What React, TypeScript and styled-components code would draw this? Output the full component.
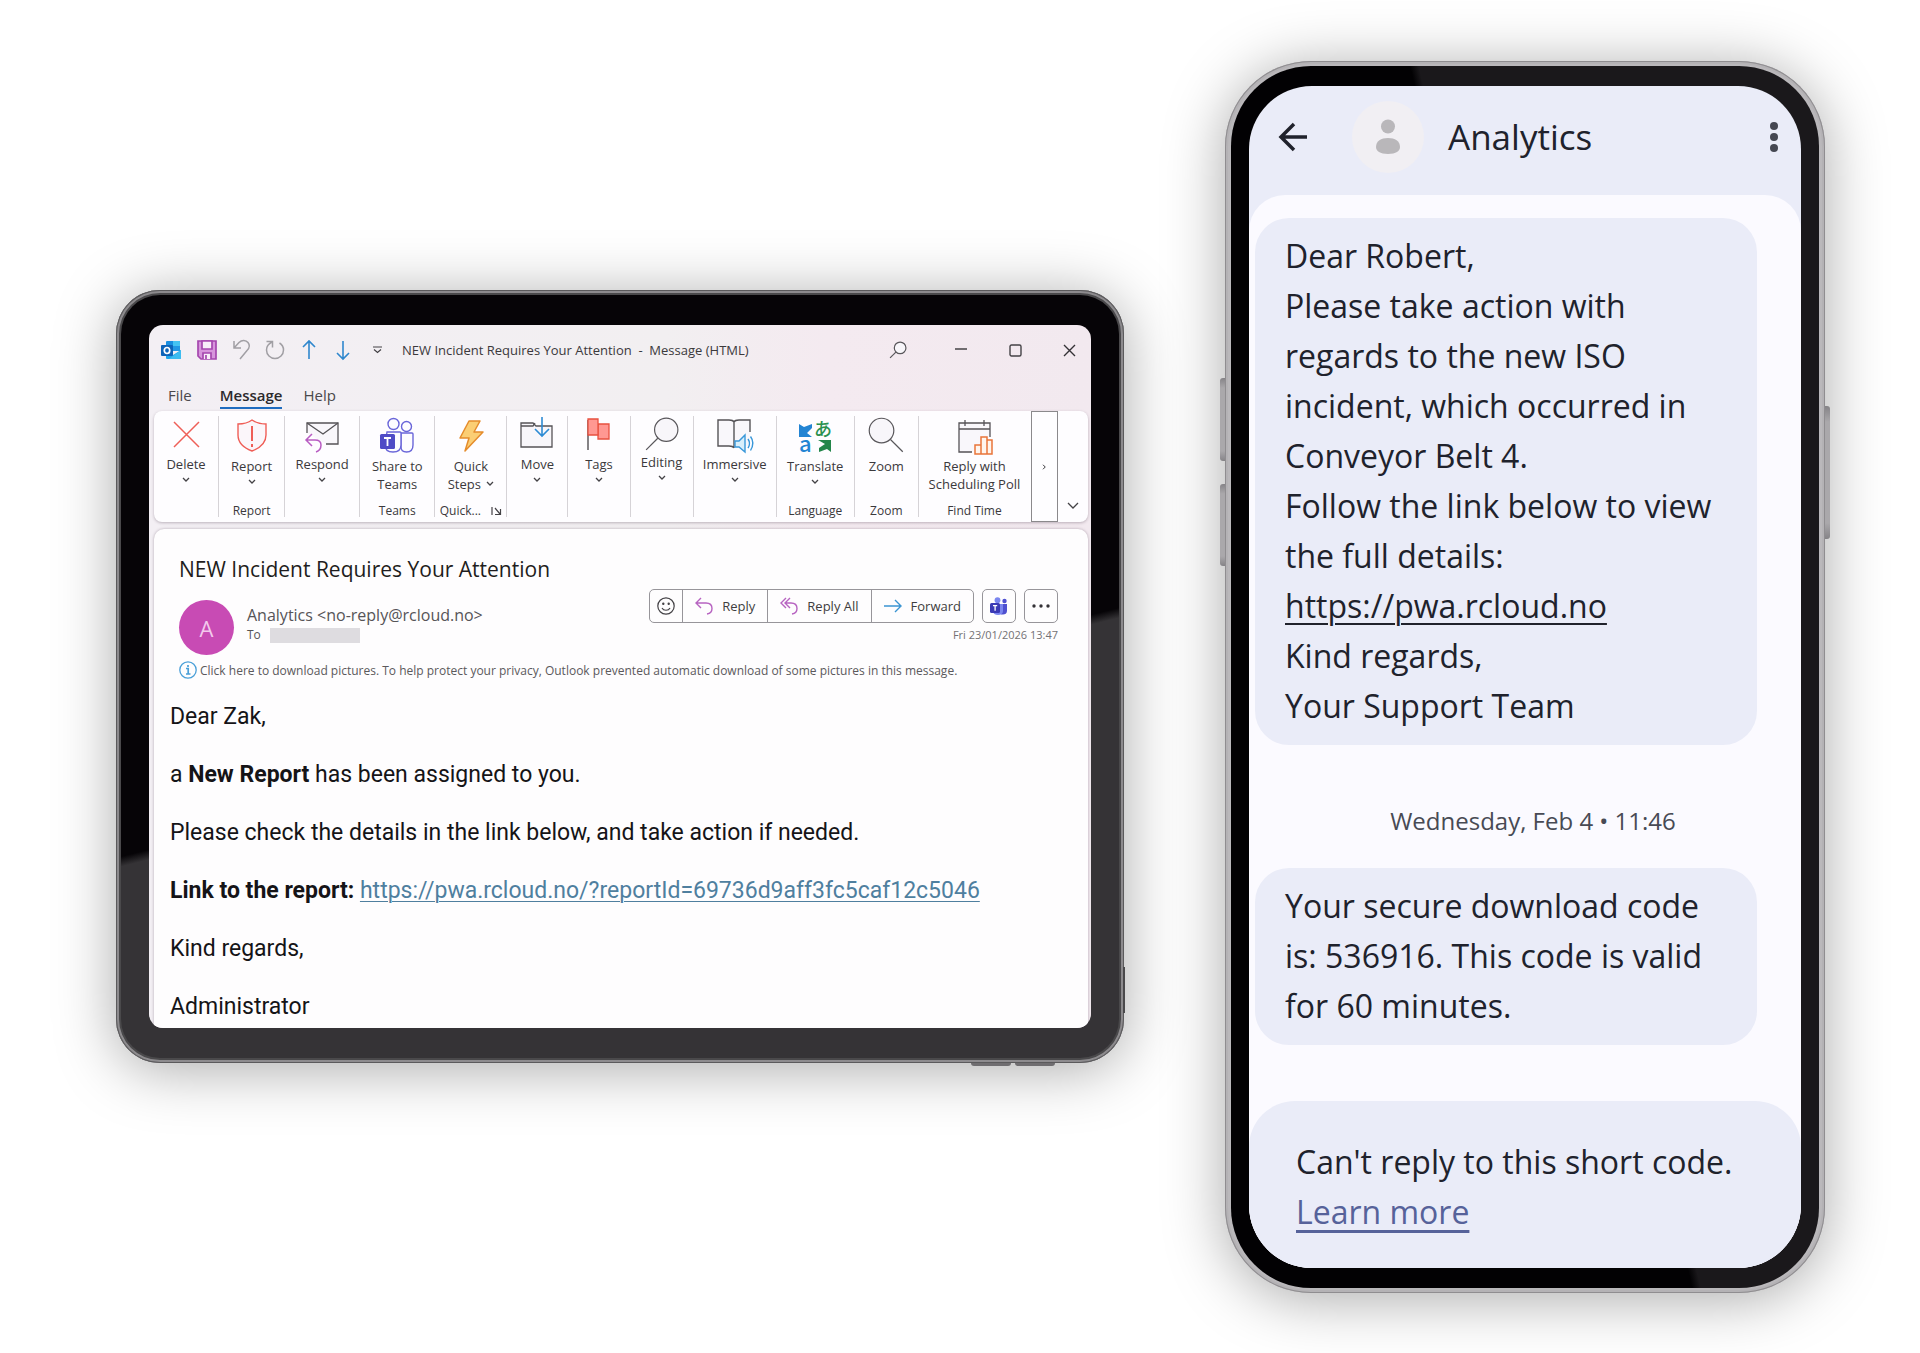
import React from 'react';
import styled, { createGlobalStyle, css } from 'styled-components';

const GlobalStyle = createGlobalStyle`
  *, *::before, *::after { box-sizing: border-box; }
  body {
    margin: 0;
    background: #fff;
    font-family: 'Open Sans', 'Noto Sans', sans-serif;
  }
  button {
    margin: 0;
    padding: 0;
    border: 0;
    background: none;
    font: inherit;
    color: inherit;
    cursor: pointer;
  }
  h1, h2, p { margin: 0; font-weight: 400; }
  svg { display: block; flex: none; overflow: visible; }
`;

const Stage = styled.main`
  display: flex;
  align-items: center;
  gap: 101px;
  min-height: 100vh;
  padding: 60px 95px 60px 116px;
`;

/* ---------- devices ---------- */

const Tablet = styled.section`
  position: relative;
  flex: 1 1 1008px;
  min-width: 0;
  padding: 5px;
  border-radius: 44px;
  background: #4a494b;
  box-shadow:
    inset 0 0 0 1px #5b5a5c,
    inset 0 0 0 3px #8d8b8e,
    0 6px 60px rgba(0, 0, 0, 0.34);
`;

const TabletBezel = styled.div`
  padding: 30px 28px;
  border-radius: 39px;
  background: linear-gradient(166deg, #060407 55.5%, #353336 56.5%);
`;

const TabletScreen = styled.div`
  overflow: hidden;
  padding: 0 3px 0 5px;
  border-radius: 14px;
  background: linear-gradient(90deg, #f3eff4 0%, #f2eff1 55%, #f4eaf0 72%, #f2e9ef 100%);
`;

const Phone = styled.section`
  position: relative;
  flex: 0 1 600px;
  min-width: 0;
  padding: 5px 6px;
  border-radius: 86px;
  background: #bab8bb;
  box-shadow:
    inset 0 0 0 1px #8f8d90,
    inset 0 0 0 3px #b4b2b5,
    0 6px 60px rgba(0, 0, 0, 0.34);
`;

const PhoneBezel = styled.div`
  padding: 20px 18px;
  border-radius: 80px;
  background: linear-gradient(77deg, #020103 53%, #1a181b 54%);
`;

const PhoneScreen = styled.div`
  overflow: hidden;
  border-radius: 63px;
  background: #eaecf8;
  color: #20222c;
`;

const SideKey = styled.span<{ $side: 'left' | 'right' | 'bottom'; $at: number; $length: number }>`
  position: absolute;
  background: linear-gradient(#858387, #aaa8ab 12%, #aaa8ab 88%, #858387);
  ${({ $side, $at, $length }) =>
    $side === 'bottom'
      ? css`
          bottom: -3px;
          right: ${$at}px;
          width: ${$length}px;
          height: 3px;
          border-radius: 0 0 3px 3px;
          background: #6f6d70;
        `
      : css`
          ${$side}: -5px;
          top: ${$at}px;
          width: 5px;
          height: ${$length}px;
          border-radius: ${$side === 'left' ? '3px 0 0 3px' : '0 3px 3px 0'};
        `}
`;

const TabletEdge = styled.span`
  position: absolute;
  right: -1px;
  bottom: 50px;
  width: 2px;
  height: 46px;
  background: #4a494b;
`;

/* ---------- outlook title bar ---------- */

const TitleBar = styled.header`
  display: flex;
  align-items: center;
  height: 50px;
  margin-left: -2px;
  color: #3b393c;
  font-size: 13px;
`;

const QuickButton = styled.button<{ $wide?: boolean }>`
  display: flex;
  justify-content: center;
  width: ${({ $wide }) => ($wide ? 38 : 34)}px;
`;

const WindowTitle = styled.h1`
  flex: 1;
  min-width: 0;
  padding-left: 8px;
  font-size: 13px;
  line-height: 20px;
  white-space: pre;
`;

const WindowButton = styled.button<{ $width?: number }>`
  display: flex;
  justify-content: center;
  width: ${({ $width = 54 }) => $width}px;
  &:last-child { margin-left: 8px; }
`;

const Tabs = styled.nav`
  display: flex;
  align-items: flex-start;
  gap: 21px;
  height: 36px;
  padding: 9px 14px;
`;

const Tab = styled.button<{ $active?: boolean }>`
  padding-bottom: 1px;
  border-bottom: 2px solid ${({ $active }) => ($active ? '#1f6cbf' : 'transparent')};
  color: ${({ $active }) => ($active ? '#2b292c' : '#4a484b')};
  font-size: 15px;
  font-weight: ${({ $active }) => ($active ? 600 : 400)};
  line-height: 22px;
  &:first-child { margin-right: 7px; }
`;

/* ---------- ribbon ---------- */

const Ribbon = styled.div`
  display: grid;
  grid-template-columns: 65fr 66fr 75fr 75fr 72fr 61fr 62fr 63fr 83fr 78fr 64fr 112fr 27px 30px;
  height: 111px;
  border-radius: 8px;
  background: #fefdff;
  box-shadow: 0 1px 3px rgba(60, 40, 60, 0.3);
  color: #3b393c;
`;

const Group = styled.section<{ $last?: boolean }>`
  display: flex;
  flex-direction: column;
  align-items: center;
  justify-content: space-between;
  margin: 5px 0;
  border-right: 1px solid ${({ $last }) => ($last ? 'transparent' : '#d6d3d7')};
`;

const GroupButton = styled.button<{ $captioned?: boolean }>`
  display: flex;
  flex-direction: column;
  align-items: center;
  font-size: 13px;
  line-height: 18px;
  white-space: pre;
  svg:first-child { margin: ${({ $captioned }) => ($captioned ? '0 0 3px' : '0 0 1px')}; }
`;

const StepLine = styled.span`
  display: flex;
  align-items: center;
  gap: 5px;
`;

const Caption = styled.span`
  display: flex;
  align-items: center;
  gap: 10px;
  font-size: 12px;
  line-height: 12px;
`;

const MoreGroups = styled.button`
  display: flex;
  align-items: center;
  justify-content: center;
  border: 1px solid #8b898c;
`;

const CollapseRibbon = styled.button`
  display: flex;
  align-items: flex-end;
  justify-content: center;
  padding-bottom: 12px;
`;

/* ---------- mail ---------- */

const Mail = styled.article`
  margin-top: 7px;
  padding: 24px 30px 7px 25px;
  border-radius: 10px 10px 0 0;
  background: #fefdfe;
  box-shadow: 0 0 3px rgba(60, 40, 60, 0.35);
`;

const Subject = styled.h2`
  color: #1f1d20;
  font-size: 21px;
  line-height: 32px;
`;

const MailHead = styled.div`
  display: flex;
  align-items: flex-start;
  padding-top: 4px;
`;

const Avatar = styled.span`
  display: flex;
  align-items: center;
  justify-content: center;
  width: 55px;
  height: 55px;
  margin: 11px 13px 0 0;
  border-radius: 50%;
  background: #c84bb4;
  color: #f3c9ec;
  font-size: 22px;
`;

const Sender = styled.div`
  flex: 1;
  min-width: 0;
  padding-top: 15px;
  color: #565457;
  font-size: 16px;
  line-height: 22px;
`;

const ToLine = styled.div`
  display: flex;
  align-items: center;
  gap: 9px;
  font-size: 12px;
  line-height: 18px;
`;

const Redacted = styled.span`
  width: 90px;
  height: 15px;
  background: #dedce0;
`;

const Actions = styled.div`
  display: flex;
  flex-direction: column;
  align-items: flex-end;
  color: #3f3d40;
  font-size: 13px;
`;

const ActionRow = styled.div`
  display: flex;
  gap: 8px;
`;

const ActionGroup = styled.div`
  display: flex;
  height: 34px;
  border: 1px solid #97959a;
  border-radius: 5px;
`;

const Action = styled.button<{ $icon?: boolean }>`
  display: flex;
  align-items: center;
  justify-content: center;
  gap: 9px;
  min-width: 32px;
  padding: 0 ${({ $icon }) => ($icon ? 0 : 12)}px;
  & + & { border-left: 1px solid #97959a; }
`;

const Sent = styled.time`
  color: #737174;
  font-size: 11px;
  line-height: 24px;
`;

const InfoBar = styled.button`
  display: flex;
  align-items: center;
  gap: 3px;
  height: 30px;
  color: #5b595c;
  font-size: 12px;
  text-align: left;
`;

const MailBody = styled.div`
  display: flex;
  flex-direction: column;
  gap: 29px;
  margin-left: -9px;
  padding-top: 17px;
  color: #151417;
  font-family: Roboto, 'Open Sans', sans-serif;
  font-size: 23px;
  line-height: 29px;
`;

const MailLink = styled.a`
  color: #4f7f9f;
  text-decoration-thickness: 1px;
  text-underline-offset: 3px;
`;

/* ---------- phone messages ---------- */

const ChatHeader = styled.header`
  display: flex;
  align-items: center;
  height: 109px;
  padding: 0 22px 6px 29px;
`;

const Contact = styled.span`
  display: flex;
  align-items: center;
  justify-content: center;
  width: 72px;
  height: 72px;
  margin: 0 24px 0 44px;
  border-radius: 50%;
  background: #f1eff3;
`;

const ContactName = styled.h2`
  flex: 1;
  font-size: 35px;
  line-height: 50px;
`;

const Thread = styled.div`
  display: flex;
  flex-direction: column;
  padding: 23px 44px 56px 6px;
  border-radius: 36px 36px 0 0;
  background: #fbfaff;
`;

const Bubble = styled.div`
  padding: 13px 30px 14px;
  border-radius: 34px;
  background: #eaecf8;
  font-size: 32px;
  line-height: 50px;
`;

const ChatLink = styled.a`
  color: inherit;
  text-decoration-thickness: 2px;
  text-underline-offset: 5px;
`;

const DateLine = styled.time`
  padding: 51px 0 22px 54px;
  color: #484a54;
  font-size: 24px;
  line-height: 50px;
  text-align: center;
`;

const ChatFooterArea = styled.div`
  background: #fbfaff;
`;

const ChatFooter = styled.footer`
  padding: 36px 47px 31px;
  border-radius: 46px 46px 0 0;
  background: #eaecf8;
  font-size: 32px;
  line-height: 50px;
`;

const LearnMore = styled(ChatLink)`
  color: #56629a;
  text-decoration-thickness: 3px;
  text-underline-offset: 6px;
`;

/* ---------- icons ---------- */

const Chevron = ({ size = 8, gap = 4 }: { size?: number; gap?: number }) => (
  <svg width={size} height={size + gap} viewBox={`0 0 8 ${8 + gap}`} fill="none" stroke="#444246" strokeWidth="1.3">
    <path d={`M1 ${3 + gap / 2} l3 3 l3 -3`} />
  </svg>
);

const OutlookIcon = () => (
  <svg width="20" height="20" viewBox="0 0 20 20">
    <path d="M6 1h12a1 1 0 0 1 1 1v9H5V2a1 1 0 0 1 1-1z" fill="#1a8fe0" />
    <path d="M12 1h6a1 1 0 0 1 1 1v4h-7z" fill="#45c4f2" />
    <path d="M12 6h7v5h-7z" fill="#2398e4" />
    <path d="M5 11l7 4 8-5v8a1 1 0 0 1-1 1H6a1 1 0 0 1-1-1z" fill="#1fa6ea" />
    <path d="M20 10v8a1 1 0 0 1-1 1H8z" fill="#3cbcf0" />
    <rect x="0" y="5" width="12" height="11" rx="1" fill="#0f64b8" />
    <ellipse cx="6" cy="10.500" rx="2.700" ry="3" fill="none" stroke="#fff" strokeWidth="1.700" />
  </svg>
);

const SaveIcon = () => (
  <svg width="20" height="20" viewBox="0 0 20 20" fill="none" stroke="#a546ae" strokeWidth="1.700">
    <path d="M1 1h18v18H4l-3-3z" fill="#d795dc" />
    <path d="M5 1h10v8H5z" fill="#f8edf9" />
    <path d="M6 19v-6h8v6" fill="#f8edf9" />
    <path d="M9 15v4" />
  </svg>
);

const UndoIcon = () => (
  <svg width="19" height="20" viewBox="0 0 19 20" fill="none" stroke="#a19fa4" strokeWidth="1.500">
    <path d="M2 1v7h7M2 8l5-5.500c3-3 7-2.500 9 0s1.500 5.500-1 8L8 19" />
  </svg>
);

const RedoIcon = () => (
  <svg width="20" height="20" viewBox="0 0 20 20" fill="none" stroke="#a19fa4" strokeWidth="1.500">
    <path d="M1.500 1.500h6v6M7 2C4 3.500 1.500 6.500 1.500 10a8.500 8.500 0 0 0 17 0c0-3-1.500-5.500-4-7" />
  </svg>
);

const UpArrow = ({ down }: { down?: boolean }) => (
  <svg width="14" height="20" viewBox="0 0 14 20" fill="none" stroke="#2f87cd" strokeWidth="1.600">
    <path d={down ? 'M7 1v18M1 13l6 6 6-6' : 'M7 19V1M1 7l6-6 6 6'} />
  </svg>
);

const CustomizeIcon = () => (
  <svg width="9" height="8" viewBox="0 0 9 8" fill="none" stroke="#444246" strokeWidth="1.200">
    <path d="M0 1h9M1 3.500l3.500 3 3.500-3" />
  </svg>
);

const Magnifier = ({ size, flip, thin = 1.2 }: { size: number; flip?: boolean; thin?: number }) => (
  <svg width={size} height={size} viewBox="0 0 34 34" fill="#f8f6fa" stroke="#59575b" strokeWidth={(thin * 34) / size}>
    <g transform={flip ? 'translate(34 0) scale(-1 1)' : undefined}>
      <circle cx="13" cy="13" r="11" />
      <path d="M21 21l11 11" />
    </g>
  </svg>
);

const DeleteIcon = () => (
  <svg width="38" height="38" viewBox="0 0 38 38" fill="none" stroke="#ee5f58" strokeWidth="1.500">
    <path d="M7 6l25 25M32 6L7 31" />
  </svg>
);

const ReportIcon = () => (
  <svg width="38" height="38" viewBox="0 0 38 38" fill="#fbf6fa" stroke="#ef5e57" strokeWidth="1.400">
    <path d="M19 4c4 3 9 4 14 4v11c0 8-6 13-14 16C11 32 5 27 5 19V8c5 0 10-1 14-4z" />
    <path d="M19 10v15M19 28v3" strokeWidth="2" />
  </svg>
);

const RespondIcon = () => (
  <svg width="38" height="38" viewBox="0 0 38 38" fill="none" stroke="#555357" strokeWidth="1.300">
    <path d="M4 17V7h31v21H23" fill="#f9f7fb" />
    <path d="M4 7l16 11L35 7" />
    <path d="M9 18l-6 6 6 6M3 24h9c4 0 6 2 6 5s-2 6-5 7" stroke="#b85cc2" strokeWidth="1.500" />
  </svg>
);

const TeamsLineIcon = () => (
  <svg width="38" height="38" viewBox="0 0 38 38" fill="#fdfcff" stroke="#6a66d9" strokeWidth="1.400">
    <circle cx="15.500" cy="8" r="5.500" />
    <circle cx="28.500" cy="10.500" r="5" />
    <path d="M23 17h11a1 1 0 0 1 1 1v11c0 5-3 7-6.500 7S23 34 23 31z" />
    <path d="M9 16h13a1 1 0 0 1 1 1v12c0 5-3 7-8 7s-8-2-8-7z" />
    <rect x="2" y="18" width="15" height="15" rx="1.500" fill="#4f4bc6" stroke="none" />
    <path d="M6 22h7M9.500 22v8" stroke="#fff" strokeWidth="1.800" />
  </svg>
);

const BoltIcon = () => (
  <svg width="38" height="38" viewBox="0 0 38 38" fill="#fbce74" stroke="#e58c2c" strokeWidth="1.500" strokeLinejoin="round">
    <path d="M17 5h11l-6 11h9L13 35l4-13H8z" />
  </svg>
);

const MoveIcon = () => (
  <svg width="38" height="38" viewBox="0 0 38 38" fill="none" stroke="#555357" strokeWidth="1.300">
    <path d="M3 31V7h12l3 3h16v21z" fill="#f8f6fa" />
    <path d="M3 10h12l2-3" />
    <path d="M24 1v19M17 13l7 7 7-7" stroke="#2d8bd4" strokeWidth="1.600" />
  </svg>
);

const TagsIcon = () => (
  <svg width="38" height="38" viewBox="0 0 38 38" fill="#ff9892" stroke="#e8503f" strokeWidth="1.300">
    <path d="M8 34V4" stroke="#444246" />
    <path d="M18 8h11v15H18z" />
    <path d="M8 3h10v16H8z" />
  </svg>
);

const ImmersiveIcon = () => (
  <svg width="38" height="38" viewBox="0 0 38 38" fill="#f9f7fb" stroke="#555357" strokeWidth="1.400">
    <path d="M18 6c-2-2-3-2-5-2H2v26h11c2 0 4 0 5 2 1-2 3-2 5-2h11V4H23c-2 0-4 0-5 2z" stroke="none" />
    <path d="M34 16V4H23c-2 0-4 0-5 2-1-2-3-2-5-2H2v26h11c2 0 4 0 5 2M18 6v26" fill="none" />
    <path d="M19 25v6h4l6 5V19l-6 6z" fill="#d9effb" stroke="#3997d9" />
    <path d="M32 23c2 3 2 6 0 9M34.500 20.500c3 4 3 9 0 14" fill="none" stroke="#3997d9" />
  </svg>
);

const Glyph = styled.text`
  font-family: 'Noto Sans CJK JP', sans-serif;
  font-weight: 500;
`;

const TranslateIcon = () => (
  <svg width="38" height="38" viewBox="0 0 38 38">
    <path d="M3 8v13h13l-5-4 5-5V8l-8 3z" fill="#2384d3" />
    <Glyph x="3" y="36" fontSize="22" fill="#2384d3">a</Glyph>
    <Glyph x="18" y="20" fontSize="18" fill="#2b9150">あ</Glyph>
    <path d="M22 24h13v12l-4-3-8 3v-4l6-4z" fill="#23864a" />
  </svg>
);

const PollIcon = () => (
  <svg width="38" height="38" viewBox="0 0 38 38" fill="none" stroke="#555357" strokeWidth="1.300">
    <path d="M17 36H4V7h31v14" fill="#f9f7fb" />
    <path d="M4 13h31M10 4v6M29 4v6" />
    <path d="M20 29h6v9h-6zM26 21h6v17h-6zM32 24h5v14h-5z" fill="#fff5ee" stroke="#e9743a" strokeWidth="1.500" />
  </svg>
);

const LauncherIcon = () => (
  <svg width="11" height="10" viewBox="0 0 11 10" fill="none" stroke="#444246" strokeWidth="1.200">
    <path d="M1 1v8M4 2l5 6M9.500 3v5.500H4" />
  </svg>
);

const SmileIcon = () => (
  <svg width="18" height="18" viewBox="0 0 18 18" fill="none" stroke="#444246" strokeWidth="1.200">
    <circle cx="9" cy="9" r="8.200" />
    <path d="M5 11c1.500 3 6.500 3 8 0" />
    <circle cx="6.300" cy="6.800" r="0.600" fill="#444246" />
    <circle cx="11.700" cy="6.800" r="0.600" fill="#444246" />
  </svg>
);

const ReplyIcon = ({ all }: { all?: boolean }) => (
  <svg width="18" height="18" viewBox="0 0 18 18" fill="none" stroke="#b763c1" strokeWidth="1.400">
    {all ? (
      <path d="M6 1L1 6l5 5M10 1L5 6l5 5M5 6h6c4 0 6 2 6 5.500S15 16.500 12 17" />
    ) : (
      <path d="M6 1L1 6l5 5M1 6h10c4 0 6 2 6 5.500S15 16.500 12 17" />
    )}
  </svg>
);

const ForwardIcon = () => (
  <svg width="18" height="14" viewBox="0 0 18 14" fill="none" stroke="#3b94d2" strokeWidth="1.400">
    <path d="M0 7h16M11 1l6 6-6 6" />
  </svg>
);

const TeamsIcon = () => (
  <svg width="18" height="18" viewBox="0 0 18 18">
    <circle cx="7.500" cy="3.200" r="2.900" fill="#7b86ef" />
    <circle cx="14.500" cy="4" r="2.200" fill="#4f50d0" />
    <path d="M11 7h6v7c0 2.500-2 3.500-4 3.500h-2z" fill="#4f50d0" />
    <path d="M3 7h10v7c0 2.500-2 4-5 4s-5-1.500-5-4z" fill="#7b86ef" />
    <rect x="0" y="6" width="10" height="10" rx="1.500" fill="#3a39b5" />
    <path d="M3 8.700h4.200M5.100 8.700v5" stroke="#fff" strokeWidth="1.300" />
  </svg>
);

const Dots = ({ vertical }: { vertical?: boolean }) =>
  vertical ? (
    <svg width="10" height="32" viewBox="0 0 10 32" fill="#454752">
      <circle cx="5" cy="5" r="4" />
      <circle cx="5" cy="16" r="4" />
      <circle cx="5" cy="27" r="4" />
    </svg>
  ) : (
    <svg width="18" height="4" viewBox="0 0 18 4" fill="#343236">
      <circle cx="2" cy="2" r="1.700" />
      <circle cx="9" cy="2" r="1.700" />
      <circle cx="16" cy="2" r="1.700" />
    </svg>
  );

const InfoIcon = () => (
  <svg width="18" height="18" viewBox="0 0 18 18" fill="none" stroke="#4a9fd8" strokeWidth="1.300">
    <circle cx="9" cy="9" r="8.200" />
    <path d="M7 7.500h2.200V13M7 13h4.500M9 4v2" strokeWidth="1.700" />
  </svg>
);

const MinimizeIcon = () => (
  <svg width="12" height="14" viewBox="0 0 12 14" stroke="#444246" strokeWidth="1.300">
    <path d="M0 6h12" />
  </svg>
);

const MaximizeIcon = () => (
  <svg width="13" height="13" viewBox="0 0 13 13" fill="none" stroke="#444246" strokeWidth="1.400">
    <rect x="1" y="1" width="11" height="11" rx="1.500" />
  </svg>
);

const CloseIcon = () => (
  <svg width="13" height="13" viewBox="0 0 13 13" stroke="#343236" strokeWidth="1.400">
    <path d="M1 1l11 11M12 1L1 12" />
  </svg>
);

const BackIcon = () => (
  <svg width="30" height="30" viewBox="0 0 30 30" fill="none" stroke="#20222c" strokeWidth="3.500">
    <path d="M29 15H3M16 2L3 15l13 13" />
  </svg>
);

const PersonIcon = () => (
  <svg width="26" height="36" viewBox="0 0 26 36" fill="#b9b7ba">
    <circle cx="13" cy="7.500" r="7" />
    <path d="M1 28c0-6 5-9 12-9s12 3 12 9c0 4-4 7-12 7S1 32 1 28z" />
  </svg>
);

const MoreIcon = () => (
  <svg width="5" height="6" viewBox="0 0 6 8" fill="none" stroke="#343236" strokeWidth="1.300">
    <path d="M1 1l3 3-3 3" />
  </svg>
);

const CollapseIcon = () => (
  <svg width="12" height="8" viewBox="0 0 12 8" fill="none" stroke="#444246" strokeWidth="1.300">
    <path d="M1 1l5 5 5-5" />
  </svg>
);

/* ---------- screens ---------- */

type RibbonItem = {
  label: string;
  icon: React.ReactNode;
  caption?: string;
  menu?: 'below' | 'inline';
  launcher?: boolean;
};

const ribbonItems: RibbonItem[] = [
  { label: 'Delete', icon: <DeleteIcon />, menu: 'below' },
  { label: 'Report', icon: <ReportIcon />, caption: 'Report', menu: 'below' },
  { label: 'Respond', icon: <RespondIcon />, menu: 'below' },
  { label: 'Share to\nTeams', icon: <TeamsLineIcon />, caption: 'Teams' },
  { label: 'Quick\nSteps', icon: <BoltIcon />, caption: 'Quick...', menu: 'inline', launcher: true },
  { label: 'Move', icon: <MoveIcon />, menu: 'below' },
  { label: 'Tags', icon: <TagsIcon />, menu: 'below' },
  { label: 'Editing', icon: <Magnifier size={36} flip />, menu: 'below' },
  { label: 'Immersive', icon: <ImmersiveIcon />, menu: 'below' },
  { label: 'Translate', icon: <TranslateIcon />, caption: 'Language', menu: 'below' },
  { label: 'Zoom', icon: <Magnifier size={38} />, caption: 'Zoom' },
  { label: 'Reply with\nScheduling Poll', icon: <PollIcon />, caption: 'Find Time' },
];

const RibbonGroup = ({ item, last }: { item: RibbonItem; last: boolean }) => {
  const lines = item.label.split('\n');
  return (
    <Group $last={last}>
      <GroupButton type="button" $captioned={Boolean(item.caption)}>
        {item.icon}
        {lines.map((line, i) =>
          item.menu === 'inline' && i === lines.length - 1 ? (
            <StepLine key={line}>
              {line}
              <Chevron />
            </StepLine>
          ) : (
            <span key={line}>{line}</span>
          ),
        )}
        {item.menu === 'below' && <Chevron />}
      </GroupButton>
      {item.caption && (
        <Caption>
          {item.caption}
          {item.launcher && <LauncherIcon />}
        </Caption>
      )}
    </Group>
  );
};

const OutlookWindow = () => (
  <TabletScreen>
    <TitleBar>
      <QuickButton type="button" $wide aria-label="Outlook"><OutlookIcon /></QuickButton>
      <QuickButton type="button" aria-label="Save"><SaveIcon /></QuickButton>
      <QuickButton type="button" aria-label="Undo"><UndoIcon /></QuickButton>
      <QuickButton type="button" aria-label="Redo"><RedoIcon /></QuickButton>
      <QuickButton type="button" aria-label="Previous item"><UpArrow /></QuickButton>
      <QuickButton type="button" aria-label="Next item"><UpArrow down /></QuickButton>
      <QuickButton type="button" aria-label="Customize toolbar"><CustomizeIcon /></QuickButton>
      <WindowTitle>{'NEW Incident Requires Your Attention  -  Message (HTML)'}</WindowTitle>
      <WindowButton type="button" $width={72} aria-label="Search"><Magnifier size={18} flip /></WindowButton>
      <WindowButton type="button" aria-label="Minimize"><MinimizeIcon /></WindowButton>
      <WindowButton type="button" aria-label="Maximize"><MaximizeIcon /></WindowButton>
      <WindowButton type="button" $width={38} aria-label="Close"><CloseIcon /></WindowButton>
    </TitleBar>
    <Tabs>
      <Tab type="button">File</Tab>
      <Tab type="button" $active>Message</Tab>
      <Tab type="button">Help</Tab>
    </Tabs>
    <Ribbon>
      {ribbonItems.map((item, i) => (
        <RibbonGroup key={item.label} item={item} last={i === ribbonItems.length - 1} />
      ))}
      <MoreGroups type="button" aria-label="More commands"><MoreIcon /></MoreGroups>
      <CollapseRibbon type="button" aria-label="Collapse ribbon"><CollapseIcon /></CollapseRibbon>
    </Ribbon>
    <Mail>
      <Subject>NEW Incident Requires Your Attention</Subject>
      <MailHead>
        <Avatar>A</Avatar>
        <Sender>
          Analytics &lt;no-reply@rcloud.no&gt;
          <ToLine>
            To <Redacted />
          </ToLine>
        </Sender>
        <Actions>
          <ActionRow>
            <ActionGroup>
              <Action type="button" $icon aria-label="React"><SmileIcon /></Action>
              <Action type="button"><ReplyIcon />Reply</Action>
              <Action type="button"><ReplyIcon all />Reply All</Action>
              <Action type="button"><ForwardIcon />Forward</Action>
            </ActionGroup>
            <ActionGroup>
              <Action type="button" $icon aria-label="Share to Teams"><TeamsIcon /></Action>
            </ActionGroup>
            <ActionGroup>
              <Action type="button" $icon aria-label="More actions"><Dots /></Action>
            </ActionGroup>
          </ActionRow>
          <Sent dateTime="2026-01-23T13:47">Fri 23/01/2026 13:47</Sent>
        </Actions>
      </MailHead>
      <InfoBar type="button">
        <InfoIcon />
        Click here to download pictures. To help protect your privacy, Outlook prevented automatic download of some pictures in this message.
      </InfoBar>
      <MailBody>
        <p>Dear Zak,</p>
        <p>a <b>New Report</b> has been assigned to you.</p>
        <p>Please check the details in the link below, and take action if needed.</p>
        <p>
          <b>Link to the report:</b>{' '}
          <MailLink href="https://pwa.rcloud.no/?reportId=69736d9aff3fc5caf12c5046">
            https://pwa.rcloud.no/?reportId=69736d9aff3fc5caf12c5046
          </MailLink>
        </p>
        <p>Kind regards,</p>
        <p>Administrator</p>
      </MailBody>
    </Mail>
  </TabletScreen>
);

const MessagesApp = () => (
  <PhoneScreen>
    <ChatHeader>
      <button type="button" aria-label="Back"><BackIcon /></button>
      <Contact><PersonIcon /></Contact>
      <ContactName>Analytics</ContactName>
      <button type="button" aria-label="More options"><Dots vertical /></button>
    </ChatHeader>
    <Thread>
      <Bubble>
        <p>Dear Robert,</p>
        <p>Please take action with regards to the new ISO incident, which occurred in Conveyor Belt 4.</p>
        <p>Follow the link below to view the full details:</p>
        <p><ChatLink href="https://pwa.rcloud.no">https://pwa.rcloud.no</ChatLink></p>
        <p>Kind regards,</p>
        <p>Your Support Team</p>
      </Bubble>
      <DateLine>Wednesday, Feb 4 • 11:46</DateLine>
      <Bubble>
        <p>Your secure download code is: 536916. This code is valid for 60 minutes.</p>
      </Bubble>
    </Thread>
    <ChatFooterArea>
      <ChatFooter>
        <p>Can't reply to this short code.</p>
        <p><LearnMore href="#learn-more">Learn more</LearnMore></p>
      </ChatFooter>
    </ChatFooterArea>
  </PhoneScreen>
);

export default function App() {
  return (
    <>
      <GlobalStyle />
      <Stage>
        <Tablet>
          <SideKey $side="bottom" $at={69} $length={40} />
          <SideKey $side="bottom" $at={113} $length={40} />
          <TabletEdge />
          <TabletBezel>
            <OutlookWindow />
          </TabletBezel>
        </Tablet>
        <Phone>
          <SideKey $side="left" $at={317} $length={83} />
          <SideKey $side="left" $at={423} $length={82} />
          <SideKey $side="right" $at={345} $length={133} />
          <PhoneBezel>
            <MessagesApp />
          </PhoneBezel>
        </Phone>
      </Stage>
    </>
  );
}
